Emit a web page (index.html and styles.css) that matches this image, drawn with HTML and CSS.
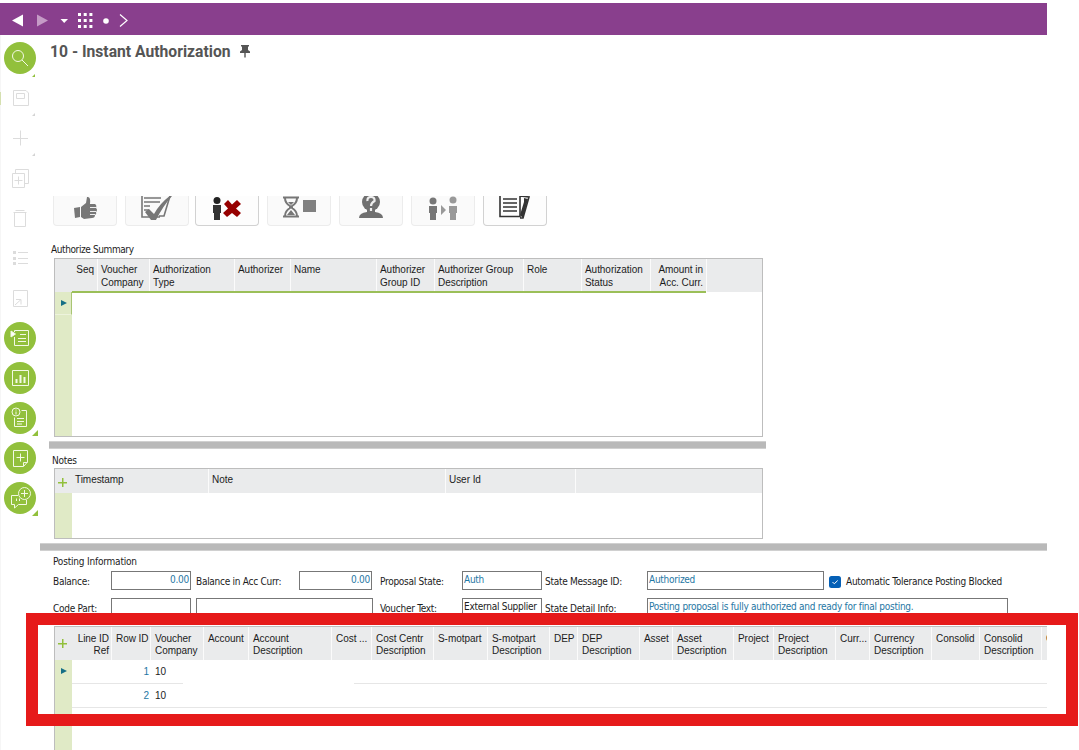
FILE: index.html
```html
<!DOCTYPE html>
<html lang="en">
<head>
    <meta charset="UTF-8">
    <meta name="viewport" content="width=device-width, initial-scale=1.0">
    <title>10 - Instant Authorization</title>
    <link rel="stylesheet" href="styles.css">
</head>
<body>
    <div class="topbar">
        <svg width="140" height="32" viewBox="0 0 140 32">
            <path d="M12 17.5L23 11.5V23.5Z" fill="#fff"/>
            <path d="M48 17.5L37 11.5V23.5Z" fill="#c59bc6"/>
            <path d="M60.500 16H68L64.200 20Z" fill="#fff"/>
            <path d="M78 11.500H92.500M78 17.500H92.500M78 23.500H92.500" stroke="#fff" stroke-width="3" stroke-dasharray="3 2.700"/>
            <circle cx="106" cy="18" r="2.800" fill="#fff"/>
            <path d="M120 11.500L127 17.500L120 23.500" fill="none" stroke="#fff" stroke-width="1.200"/>
        </svg>
    </div>
    <div class="page">
        <div class="sidebar">
            <div class="tool on corner-small">
                <svg viewBox="0 0 32 32"><circle cx="14" cy="14" r="5.500"/><path d="M18 18L24 24"/></svg>
            </div>
            <div class="tool marked">
                <svg viewBox="0 0 32 32"><path d="M9.500 8.500H22L24.500 11V23.500H9.500ZM12.500 11.500H20.500V16.500H12.500Z"/></svg>
                <i class="dot"></i>
            </div>
            <div class="tool">
                <svg viewBox="0 0 32 32"><path d="M16.500 8.500V23.500M9 16.500H24"/></svg>
                <i class="dot"></i>
            </div>
            <div class="tool">
                <svg viewBox="0 0 32 32"><path d="M8.500 11.500H20.500V25.500H8.500ZM11.500 11V7.500H24.500V21.500H21M14.500 14.500V22.500M10.500 18.500H18.500"/></svg>
            </div>
            <div class="tool">
                <svg viewBox="0 0 32 32"><path d="M10.500 10.500H21.500V24.500H10.500ZM9.500 10.500H22.500M11.500 8.500H20.500"/></svg>
            </div>
            <div class="tool">
                <svg viewBox="0 0 32 32"><path d="M14 10.500H24M14 16.500H24M14 21.500H24"/><path d="M9 10.500H12M9 16.500H12M9 21.500H12" stroke-width="3"/></svg>
            </div>
            <div class="tool">
                <svg viewBox="0 0 32 32"><path d="M9.500 8.500H23.500V24.500H9.500ZM11 23L17 17.500M12 17.500H17V22.500"/></svg>
            </div>
            <div class="tool on">
                <svg viewBox="0 0 32 32"><path d="M10.500 10V8.500H24.500V23.500H10.500V15M16 12.500H22M14 16.500H22M14 19.500H22"/><path d="M7 9L11.500 12L7 15Z" fill="#fff"/></svg>
            </div>
            <div class="tool on">
                <svg viewBox="0 0 32 32"><path d="M8.500 8.500H24.500V23.500H8.500Z"/><path d="M12.500 17V21M16.500 13V21M20.500 15V21" stroke-width="2"/></svg>
            </div>
            <div class="tool on corner">
                <svg viewBox="0 0 32 32"><circle cx="12" cy="10" r="4"/><path d="M12 7.500V8.500M12 9.500V12.500M17.500 8.500H22.500V24.500H10.500V15.500M13 16.500H20M13 19.500H20M13 22H18"/></svg>
            </div>
            <div class="tool on">
                <svg viewBox="0 0 32 32"><path d="M9.500 8.500H23.500V20L19.500 24.500H9.500ZM19.500 24V20.500H23.500M16.500 11.500V19.500M12.500 15.500H20.500"/></svg>
            </div>
            <div class="tool on corner">
                <svg viewBox="0 0 32 32"><circle cx="20.500" cy="11.500" r="6"/><path d="M20.500 8V15M17 11.500H24M14 13.500H7.500V22.500H10.500V26L14.500 22.500H22.500V18M12.500 16.500V19M15.500 16.500V19"/></svg>
            </div>
        </div>

        <div class="main">
            <div class="title">
                <h1>10 - Instant Authorization</h1>
                <svg width="12" height="14" viewBox="0 0 12 14"><path d="M2 1H10V2.500H9V6L11 7.500V9H6.700V13.500H5.300V9H1V7.500L3 6V2.500H2Z" fill="#555"/></svg>
            </div>

            <div class="actions">
                <div class="action off">
                    <svg viewBox="0 0 64 30"><g fill="#777"><path d="M21 12L27 11V21L22 22Z"/><path d="M28 11L33 7L34 1Q38 0 37 8H42Q44 9 43 12Q45 14 43 16Q44 18 42 19Q42 22 39 22L31 23L28 21Z"/></g><path d="M37 11.500H43M37 15.500H43M37 18.500H42" stroke="#eee" fill="none"/></svg>
                </div>
                <div class="action off">
                    <svg viewBox="0 0 64 30"><path d="M17 0V21H35M19 2H36M19 6H35M19 10H25M19 14H24M45 0L39 20H34" fill="none" stroke="#777" stroke-width="1.600"/><path d="M20 16L24 13L29 18Q35 7 46 -1L47 0Q38 10 31 24H26Z" fill="#777"/></svg>
                </div>
                <div class="action shifted">
                    <svg viewBox="0 0 64 30"><circle cx="22" cy="4.500" r="3.500" fill="#222"/><path d="M18 9H26V17H25V24H19V17H18Z" fill="#333"/><path d="M29 8L33 4L37 8.500L42 4L46 8L41 12.500L46 17L42 21L37 17L32 21L28 17L33 12.500Z" fill="#960000"/></svg>
                </div>
                <div class="action off">
                    <svg viewBox="0 0 64 30"><path d="M16 1.500H32M16 20.500H32M18 2Q18 7 23 10V12Q18 15 18 20M30 2Q30 7 25 10V12Q30 15 30 20" fill="none" stroke="#777" stroke-width="2"/><path d="M20 19L24 14L28 19ZM21 6H27L24 9Z" fill="#777"/><path d="M36 4H49V16H36Z" fill="#808080"/></svg>
                </div>
                <div class="action off">
                    <svg viewBox="0 0 64 30"><circle cx="32" cy="6" r="9" fill="#707070"/><path d="M20 22Q20 17 28 16V12H36V16Q44 17 44 22Z" fill="#707070"/><path d="M28.500 5Q28 1 32 1Q36 1 35.500 5Q32 7 32 10M32 12V15" fill="none" stroke="#eee" stroke-width="2.200"/></svg>
                </div>
                <div class="action off">
                    <svg viewBox="0 0 64 30"><g fill="#777"><circle cx="22" cy="5" r="3.500"/><path d="M18 10H26V17H25V24H19V17H18Z"/></g><g fill="#999"><circle cx="42" cy="4" r="3.500"/><path d="M38 10H46V17H45V24H39V17H38ZM30 9L35 14L30 19Z"/></g></svg>
                </div>
                <div class="action last">
                    <svg viewBox="0 0 64 30"><path d="M17 0V20.500H37V0M20 3H34M20 7H34M20 11H34M20 15H34M37 22H40L46 1L37 0" fill="none" stroke="#333" stroke-width="1.600"/><path d="M37 19L41 6V2L45 3L40 22Z" fill="#333"/></svg>
                </div>
            </div>

            <div class="label summary-label">Authorize Summary</div>
            <div class="grid summary">
                <div class="head">
                    <span></span><span class="right">Seq</span><span>Voucher<br>Company</span><span>Authorization<br>Type</span><span>Authorizer</span><span>Name</span><span>Authorizer<br>Group ID</span><span>Authorizer Group<br>Description</span><span>Role</span><span>Authorization<br>Status</span><span class="right">Amount in<br>Acc. Curr.</span><span></span>
                </div>
                <div class="body">
                    <div class="gutter"><div class="current"><i class="arrow"></i></div></div>
                    <div class="rows"></div>
                </div>
            </div>
            <div class="splitter short"></div>

            <div class="label notes-label">Notes</div>
            <div class="grid notes">
                <div class="head">
                    <span class="add"><i class="plus"></i></span><span>Timestamp</span><span>Note</span><span>User Id</span><span></span>
                </div>
                <div class="body">
                    <div class="gutter"></div>
                </div>
            </div>
            <div class="splitter"></div>

            <div class="label posting-label">Posting Information</div>
            <div class="form">
                <label>Balance:</label><div class="field right">0.00</div>
                <label>Balance in Acc Curr:</label><div class="field right">0.00</div>
                <label>Proposal State:</label><div class="field">Auth</div>
                <label>State Message ID:</label><div class="field">Authorized</div>
                <div class="check">
                    <svg width="12" height="12" viewBox="0 0 12 12"><rect width="12" height="12" rx="2.500" fill="#0560b6"/><path d="M3.500 6L5.300 7.800L8.700 4.500" fill="none" stroke="#fff"/></svg>
                    <label>Automatic Tolerance Posting Blocked</label>
                </div>
            </div>
            <div class="form second">
                <label>Code Part:</label><div class="field"></div><div class="field"></div>
                <label>Voucher Text:</label><div class="field dark">External Supplier</div>
                <label>State Detail Info:</label><div class="field">Posting proposal is fully authorized and ready for final posting.</div>
            </div>

            <div class="grid posting">
                <div class="head">
                    <span class="add"><i class="plus"></i></span><span class="right">Line ID<br>Ref</span><span class="right">Row ID</span><span>Voucher<br>Company</span><span>Account</span><span>Account<br>Description</span><span>Cost ...</span><span>Cost Centr<br>Description</span><span>S-motpart</span><span>S-motpart<br>Description</span><span>DEP</span><span>DEP<br>Description</span><span>Asset</span><span>Asset<br>Description</span><span>Project</span><span>Project<br>Description</span><span>Curr...</span><span>Currency<br>Description</span><span>Consolid</span><span>Consolid<br>Description</span><span>C</span>
                </div>
                <div class="body">
                    <div class="gutter"><i class="arrow"></i></div>
                    <div class="rows">
                        <div class="row first"><b>1</b><span>10</span></div>
                        <div class="row"><b>2</b><span>10</span></div>
                    </div>
                </div>
            </div>
        </div>
    </div>
    <div class="highlight"></div>
</body>
</html>
```

FILE: styles.css
```css
* {
    box-sizing: border-box;
}
body {
    margin: 0;
    padding-top: 3px;
    height: 750px;
    overflow: hidden;
    position: relative;
    background: #fff;
    color: #1c1c1c;
    font-family: "Liberation Sans", Arial, sans-serif;
    font-size: 10px;
}
.topbar {
    width: 1047px;
    height: 32px;
    background: #893f8d;
}
.topbar svg {
    display: block;
}
.page {
    display: flex;
    height: 715px;
}

/* left toolbar */
.sidebar {
    width: 40px;
    flex: none;
    padding: 7px 0 0 3px;
    border-left: 1px solid #f6f6f6;
    display: flex;
    flex-direction: column;
    gap: 8px;
}
.tool {
    position: relative;
    width: 32px;
    height: 32px;
    flex: none;
    border-radius: 50%;
}
.tool svg {
    display: block;
    fill: none;
    stroke: #dcdcdc;
    stroke-width: 1;
}
.on {
    background: #92c03c;
}
.on svg {
    stroke: #f3f9e5;
}
.corner::after,
.corner-small::after {
    content: "";
    position: absolute;
    right: -2px;
    bottom: -2px;
    border-left: 6px solid transparent;
    border-bottom: 6px solid #92c03c;
}
.corner-small::after {
    right: 1px;
    bottom: -3px;
    border-left-width: 3px;
    border-bottom-width: 3px;
}
.dot {
    position: absolute;
    right: 1px;
    bottom: -2px;
    border-left: 3px solid transparent;
    border-bottom: 3px solid #d4d4d4;
}
.marked::before {
    content: "";
    position: absolute;
    left: -4px;
    top: 10px;
    width: 1px;
    height: 13px;
    background: #d5e0b0;
}

.main {
    width: 1007px;
    flex: none;
    overflow: hidden;
    display: flex;
    flex-direction: column;
}
.title {
    display: flex;
    align-items: center;
    gap: 9px;
    height: 31px;
    padding-left: 10px;
    flex: none;
}
.title h1 {
    margin: 0;
    width: 180px;
    font: bold 17px "Roboto", sans-serif;
    color: #555;
    white-space: nowrap;
    transform: scaleX(0.922);
    transform-origin: 0 50%;
}
.actions {
    display: flex;
    gap: 8px;
    height: 30px;
    margin: 130px 0 0 13px;
    flex: none;
}
.action {
    width: 64px;
    height: 30px;
    border: 1px solid #d2d2d2;
    border-top: 0;
    border-radius: 0 0 4px 4px;
    background: #fdfdfd;
}
.shifted {
    margin-left: -2px;
}
.action svg {
    display: block;
    width: 64px;
    height: 30px;
    margin-left: -1px;
}
.off {
    border-color: #ececec;
    background: #fafafa;
}

.label,
.form {
    font-family: "DejaVu Sans Condensed", "DejaVu Sans", Tahoma, sans-serif;
    font-size: 10px;
    letter-spacing: -0.27px;
    white-space: nowrap;
}
.label {
    height: 14px;
    line-height: 14px;
    flex: none;
}
.summary-label {
    margin: 17px 0 1px 11px;
    letter-spacing: -0.4px;
}
.notes-label {
    margin: 5px 0 0 12px;
}
.posting-label {
    margin: 4px 0 2px 13px;
    letter-spacing: -0.2px;
}

/* data grids */
.grid {
    margin-left: 14px;
    width: 709px;
    flex: none;
    border: 1px solid #bdbdbd;
    display: flex;
    flex-direction: column;
}
.head {
    display: grid;
    background: #eaebec;
    line-height: 12px;
    letter-spacing: -0.05px;
    flex: none;
}
.head span {
    padding: 5px 3px 0;
    border-right: 1px solid #fbfbfb;
    white-space: nowrap;
    overflow: hidden;
}
.head span:first-child,
.summary .head span:last-child,
.notes .head span:last-child {
    border: 0;
}
.right {
    text-align: right;
}
.body {
    display: flex;
    flex: 1;
}
.gutter {
    width: 17px;
    background: #e0eac6;
}
.arrow {
    display: block;
    width: 0;
    border: 3px solid transparent;
    border-left: 6px solid #156f86;
    border-right: 0;
}
.head .add {
    padding: 0 2px 0 0;
    display: flex;
    align-items: center;
    justify-content: center;
}
.plus {
    width: 9px;
    height: 9px;
    background: linear-gradient(#92c03c, #92c03c) center / 9px 1.5px no-repeat, linear-gradient(#92c03c, #92c03c) center / 1.5px 9px no-repeat;
}
.summary {
    height: 179px;
}
.summary .head {
    height: 33px;
    line-height: 12.5px;
    grid-template-columns: 17px 26px 52px 85px 56px 86px 58px 89px 58px 69px 56px 1fr;
}
.summary .rows {
    width: 634px;
    height: 2px;
    margin-top: -1px;
    background: #9bbf58;
}
.current {
    height: 23px;
    padding: 8px 0 0 6px;
    border-right: 1px solid #a9c573;
    border-bottom: 1px solid #edf3dc;
}
.splitter {
    height: 8px;
    margin-top: 4px;
    flex: none;
    background: #b9b9b9;
    border: 1px solid #d0d0d0;
    border-width: 1px 0;
}
.short {
    width: 717px;
    margin-left: 9px;
}
.notes {
    height: 71px;
}
.notes .head {
    height: 24px;
    grid-template-columns: 17px 137px 237px 130px 1fr;
}
.notes .add {
    padding-top: 3px;
}

/* posting form */
.form {
    display: grid;
    grid-template-columns: 58px 80px 5px 103px 73px 8px 82px 80px 3px 102px 177px 5px auto;
    margin-left: 13px;
    height: 19px;
    flex: none;
}
.form label {
    line-height: 21px;
}
.field {
    height: 19px;
    border: 1px solid #777;
    padding: 0 1px;
    line-height: 16px;
    color: #1f77a4;
    overflow: hidden;
}
.form > :nth-child(3) {
    grid-column: 4;
}
.form > :nth-child(5) {
    grid-column: 7;
}
.form > :nth-child(7) {
    grid-column: 10;
}
.form > .check {
    grid-column: 13;
    display: flex;
    align-items: center;
    gap: 5px;
}
.check label {
    line-height: 19px;
}
.second {
    grid-template-columns: 58px 80px 5px 177px 7px 82px 80px 3px 102px 361px;
    margin-top: 8px;
}
.second > :nth-child(4) {
    grid-column: 6;
}
.second > :nth-child(5) {
    grid-column: 7;
}
.second > :nth-child(6) {
    grid-column: 9;
}
.second > :nth-child(7) {
    grid-column: 10;
}
.dark {
    color: #1c1c1c;
}

.posting {
    width: 1010px;
    height: 140px;
    margin-top: 9px;
}
.posting .head {
    height: 33px;
    grid-template-columns: 17px 40px 39px 53px 45px 83px 40px 62px 54px 62px 28px 62px 33px 61px 40px 62px 34px 62px 48px 62px 1fr;
}
.posting .head span:not(.add) {
    padding: 6px 2px 0 4px;
}
.posting .gutter .arrow {
    margin: 8px 0 0 6px;
}
.posting .rows {
    flex: 1;
}
.row {
    display: flex;
    height: 24px;
    line-height: 24px;
    border-bottom: 1px solid #e6e6e6;
}
.first {
    border-image: linear-gradient(90deg, #e6e6e6 112px, transparent 112px, transparent 282px, #e6e6e6 282px) 1;
}
.row b {
    width: 77px;
    text-align: right;
    font-weight: normal;
    color: #1f77a4;
}
.row span {
    padding-left: 6px;
}

/* red callout drawn over the posting rows */
.highlight {
    position: absolute;
    left: 26px;
    top: 613px;
    width: 1052px;
    height: 113px;
    border: 12px solid #e61a1a;
}
```
